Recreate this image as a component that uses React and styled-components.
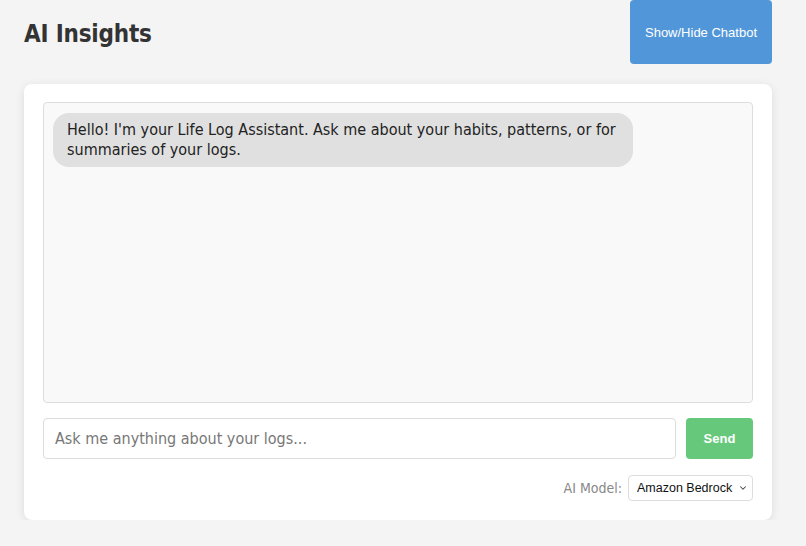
import { createGlobalStyle, styled } from "styled-components";
import { LuChevronDown } from "react-icons/lu";

const GlobalStyle = createGlobalStyle`
  html, body {
    margin: 0;
    padding: 0;
    background: #f4f4f4;
    font-family: "DejaVu Sans Condensed", "DejaVu Sans", sans-serif;
    color: #333;
  }
`;

const Page = styled.div`
  padding: 0 34px 0 24px;
`;

const Header = styled.header`
  display: flex;
  justify-content: space-between;
  align-items: center;
  height: 64px;
  margin-bottom: 20px;
`;

const Title = styled.h1`
  margin: 3px 0 0;
  font-size: 24px;
  font-weight: bold;
  letter-spacing: -0.2px;
  color: #333;
`;

const ToggleButton = styled.button`
  width: 142px;
  height: 64px;
  border: none;
  border-radius: 4px;
  background: #5196d8;
  color: #fff;
  font-family: "Liberation Sans", Arial, sans-serif;
  font-size: 13px;
  cursor: pointer;
`;

const Card = styled.section`
  background: #fff;
  border-radius: 8px;
  box-shadow: 0 2px 10px rgba(0, 0, 0, 0.1);
  padding: 18px 19px 19px;
`;

const Messages = styled.div`
  height: 279px;
  background: #f9f9f9;
  border: 1px solid #ddd;
  border-radius: 4px;
  padding: 10px 9px;
`;

const Bubble = styled.div`
  max-width: 552px;
  background: #e0e0e0;
  border-radius: 16px;
  padding: 7px 14px;
  font-size: 16px;
  line-height: 20px;
  color: #222;
`;

const InputRow = styled.form`
  display: flex;
  gap: 10px;
  margin-top: 15px;
`;

const TextInput = styled.input`
  flex: 1;
  height: 41px;
  box-sizing: border-box;
  border: 1px solid #ddd;
  border-radius: 4px;
  padding: 0 11px;
  font-family: "DejaVu Sans Condensed", "DejaVu Sans", sans-serif;
  font-size: 16px;
  color: #333;
  &::placeholder {
    color: #777;
  }
`;

const SendButton = styled.button`
  width: 67px;
  height: 41px;
  border: none;
  border-radius: 4px;
  background: #66c87a;
  color: #fff;
  font-family: "Liberation Sans", Arial, sans-serif;
  font-size: 13px;
  font-weight: bold;
  cursor: pointer;
`;

const ModelRow = styled.div`
  display: flex;
  justify-content: flex-end;
  align-items: center;
  gap: 6px;
  margin-top: 16px;
`;

const ModelLabel = styled.label`
  font-size: 14px;
  color: #888;
`;

const SelectWrap = styled.div`
  position: relative;
  display: flex;
  color: #444;
  svg {
    position: absolute;
    right: 5px;
    top: 8px;
    pointer-events: none;
  }
`;

const ModelSelect = styled.select`
  appearance: none;
  width: 125px;
  height: 26px;
  border: 1px solid #ddd;
  border-radius: 4px;
  background: #fff;
  padding: 0 12px 0 8px;
  font-family: "Liberation Sans", Arial, sans-serif;
  font-size: 12.5px;
  color: #111;
`;

export default function App() {
  return (
    <>
      <GlobalStyle />
      <Page>
        <Header>
          <Title>AI Insights</Title>
          <ToggleButton type="button">Show/Hide Chatbot</ToggleButton>
        </Header>
        <Card>
          <Messages>
            <Bubble>
              Hello! I'm your Life Log Assistant. Ask me about your habits,
              patterns, or for summaries of your logs.
            </Bubble>
          </Messages>
          <InputRow onSubmit={(e) => e.preventDefault()}>
            <TextInput type="text" placeholder="Ask me anything about your logs..." />
            <SendButton type="submit">Send</SendButton>
          </InputRow>
          <ModelRow>
            <ModelLabel htmlFor="model">AI Model:</ModelLabel>
            <SelectWrap>
              <ModelSelect id="model" defaultValue="bedrock">
                <option value="bedrock">Amazon Bedrock</option>
                <option value="openai">OpenAI</option>
              </ModelSelect>
              <LuChevronDown size={10} strokeWidth={2.5} />
            </SelectWrap>
          </ModelRow>
        </Card>
      </Page>
    </>
  );
}
